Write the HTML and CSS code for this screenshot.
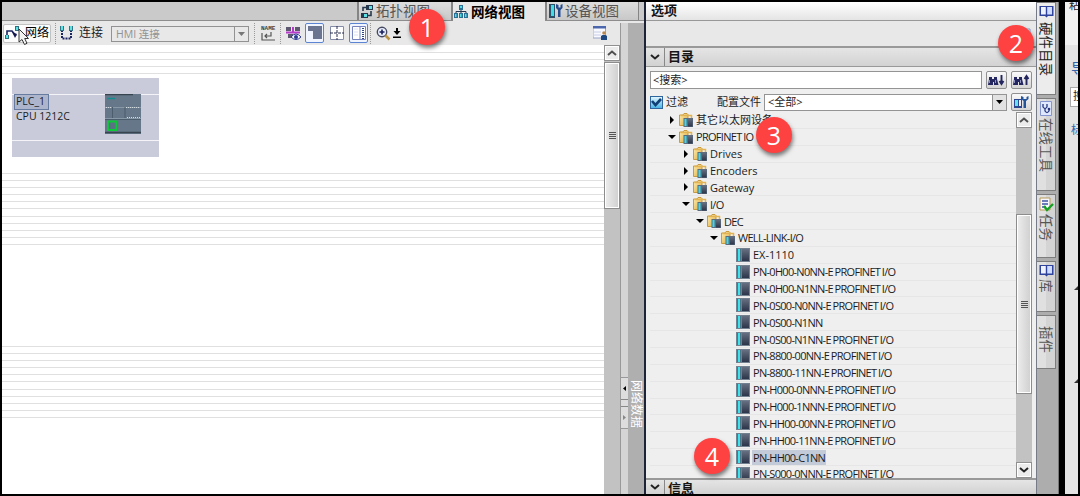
FILE: index.html
```html
<!DOCTYPE html>
<html lang="zh-CN">
<head>
    <meta charset="UTF-8">
    <meta name="viewport" content="width=device-width, initial-scale=1.0">
    <title>网络视图</title>
    <link rel="stylesheet" href="styles.css">
</head>

<body>
    <!-- shared icons -->
    <svg width="0" height="0" class="sprite">
        <linearGradient id="fold" x1="0" x2="1" y1="0" y2="1"><stop offset="0" stop-color="#fff0b4"/><stop offset="1" stop-color="#dca83c"/></linearGradient>
        <linearGradient id="dark" x1="0" x2="0" y1="0" y2="1"><stop offset="0" stop-color="#667082"/><stop offset="1" stop-color="#2c3549"/></linearGradient>
        <symbol id="folder" viewBox="0 0 14 14">
            <path d="M.5 2V12.500H9V1.500L8 .5H5L4 2Z" fill="url(#fold)" stroke="#c39336" stroke-width=".9"/>
            <path d="M1.500 2.500H12.500V6" fill="none" stroke="#e2b352" stroke-width="1.500"/>
            <path d="M4.500 5H14V14H4.500Z" fill="#5c6c7e"/>
            <path d="M5.500 6H7.500V13H5.500Z" fill="#35dde8"/>
            <path d="M9 5.500H13.500V13.500H9Z" fill="url(#dark)"/>
        </symbol>
        <symbol id="module" viewBox="0 0 14 14">
            <path d="M0 0H14V14H0Z" fill="#73808f"/>
            <path d="M1 1H5V13H1Z" fill="#4f7688"/>
            <path d="M2 1H4V13H2Z" fill="#3ce3ed"/>
            <path d="M6 1H13V13H6Z" fill="url(#dark)"/>
        </symbol>
        <symbol id="up" viewBox="0 0 10 6"><path d="M1 5L5 1.500L9 5" fill="none" stroke="#505050" stroke-width="1.900"/></symbol>
        <symbol id="down" viewBox="0 0 10 6"><path d="M1 1L5 4.500L9 1" fill="none" stroke="#222" stroke-width="2"/></symbol>
        <symbol id="book" viewBox="0 0 15 13">
            <path d="M.5 1H14.500V11H9L7.500 12.500L6 11H.5Z" fill="#2f439c"/>
            <path d="M2 2H6.800V9.500H2Z" fill="#eef3ff"/><path d="M8.200 2H13V9.500H8.200Z" fill="#cfdcff"/>
        </symbol>
        <symbol id="binoc" viewBox="0 0 11 12">
            <path d="M1 3H4V5H6V3H9V5L10.500 11H6V8H5V11H0L1 5Z" fill="#23265f"/>
            <path d="M1.500 6V9M7.500 6V9" stroke="#8d92c2"/>
        </symbol>
    </svg>

    <div class="window">
        <section class="editor">
            <div class="view-tabs">
                <div class="view-tab">
                    <svg width="15" height="15" viewBox="0 0 15 15"><path d="M6 1H13V6H6ZM1 9H8V14H1Z" fill="#27384d"/><path d="M9 2H12V5H9ZM4 10H7V13H4Z" fill="#5fe0e4"/><path d="M6 3.500H3V7M8 11.500H11V7" fill="none" stroke="#27384d" stroke-width="1.600"/></svg>
                    <span>拓扑视图</span>
                </div>
                <div class="view-tab active">
                    <svg width="14" height="14" viewBox="0 0 14 14"><path d="M5 0H9V5H5ZM0 8H4V13H0ZM5 8H9V13H5ZM10 8H14V13H10Z" fill="#2b6f95"/><path d="M6 1H8V3H6ZM1 9H2.500V12H1ZM6 9H7.500V12H6ZM11 9H12.500V12H11Z" fill="#51dce6"/><path d="M2 8V6.500H12V8M7 5V8" fill="none" stroke="#24364f"/></svg>
                    <span>网络视图</span>
                </div>
                <div class="view-tab">
                    <svg width="15" height="14" viewBox="0 0 15 14"><path d="M0 0H6V14H0Z" fill="#2d5068"/><path d="M2 1H5V12H2Z" fill="#3fdde8"/><path d="M7 0V4L9 6V13H11.500V6L13.500 4V0L11.500 1V3.500H9.500V1Z" fill="#264c8e"/></svg>
                    <span>设备视图</span>
                </div>
            </div>

            <div class="editor-body">
                <div class="editor-main">
                    <div class="toolbar">
                        <button class="tool-network">
                            <svg width="17" height="14" viewBox="0 0 17 14"><path d="M2 9V5H7L11 10" fill="none" stroke="#1b2360" stroke-width="1.600"/><path d="M0 9H4V13H0ZM10 0H14V5H10Z" fill="#2e6d82"/><path d="M1 9H3V12H1ZM11 1H13V4H11Z" fill="#55e3e3"/><path d="M7 6L12 8L10 12Z" fill="#14194f"/></svg>
                            <span>网络</span>
                        </button>
                        <i class="sep"></i>
                        <svg class="tool-link" width="13" height="14" viewBox="0 0 13 14"><path d="M2 4V12.500H11V4" fill="none" stroke="#1c2564" stroke-width="2" stroke-dasharray="2 1"/><path d="M0 0H4V5H0ZM9 0H13V5H9Z" fill="#347485"/><path d="M1 0H3V4H1ZM10 0H12V4H10Z" fill="#5ce2e2"/></svg>
                        <span class="tool-label">连接</span>
                        <div class="select-disabled"><span>HMI 连接</span><b><svg width="7" height="4"><path d="M0 0H7L3.500 4Z" fill="#777"/></svg></b></div>
                        <i class="sep"></i>
                        <div class="name-icon"><small>NAME</small><svg width="15" height="9" viewBox="0 0 15 9"><path d="M1 1V8H14M10 0V4H4M6 2L4 4L6 6" fill="none" stroke="#555" stroke-width="1.200"/></svg></div>
                        <i class="sep"></i>
                        <svg class="tool-see" width="16" height="15" viewBox="0 0 16 15"><path d="M0 1H5V5H0ZM9 1H14V5H9ZM2 8H7V12H2Z" fill="#5b5870"/><path d="M0 6.500H14M7 1V7" stroke="#b63bc9" stroke-width="2"/><path d="M5 11Q10 5 15 11Q10 16 5 11Z" fill="#fff" stroke="#2c3992"/><circle cx="10" cy="11" r="2" fill="#2c3992"/></svg>
                        <button class="tool on"><svg width="14" height="14"><path d="M0 0H14V13H5V5H0Z" fill="#6c7590"/></svg></button>
                        <button class="tool"><svg width="14" height="14" viewBox="0 0 14 14"><path d="M.5.500H13.500V13.500H.5Z" fill="#fff" stroke="#858ca8"/><path d="M0 7H14M7 0V14" stroke="#29304e" stroke-dasharray="3 1"/></svg></button>
                        <button class="tool on"><svg width="14" height="14" viewBox="0 0 14 14"><path d="M.5.500H13.500V13.500H.5Z" fill="#fff" stroke="#7582bd"/><path d="M7 1H9V13H7Z" fill="#b5c0e8"/><path d="M11 2V13" stroke="#35447a" stroke-width="2" stroke-dasharray="1 1"/><path d="M2 3H6M2 6H6M2 9H6" stroke="#dce1f3"/></svg></button>
                        <i class="sep sep-last"></i>
                        <svg width="15" height="15" viewBox="0 0 15 15"><circle cx="6" cy="6" r="4.700" fill="#e8f0ff" stroke="#454962" stroke-width="1.400"/><path d="M3.500 6H8.500M6 3.500V8.500" stroke="#18205f" stroke-width="1.600"/><path d="M9.500 9.500L13.500 13.500" stroke="#bd9442" stroke-width="2.500"/></svg>
                        <svg class="zoom-fit" width="8" height="11" viewBox="0 0 8 11"><path d="M3 0H5V3H7.500L4 7L.5 3H3ZM0 8.500H8V10H0Z" fill="#000"/></svg>
                        <svg class="tool-right" width="14" height="14" viewBox="0 0 14 14"><path d="M0 0H12.500V12H0Z" fill="#f7f9ff" stroke="#98a3c6"/><path d="M0 0H13V2.500H0Z" fill="#4c66ae"/><path d="M0 6H8M0 9H8" stroke="#c8cee4"/><circle cx="11" cy="7" r="1.800" fill="#b98850"/><path d="M8 14V10L9.500 9H12.500L14 10V14Z" fill="#204880"/></svg>
                    </div>
                    <div class="canvas-row">
                        <div class="canvas">
                            <div class="lines lines-top"></div>
                            <div class="plc">
                                <div class="plc-text">
                                    <b>PLC_1</b>
                                    <span>CPU 1212C</span>
                                </div>
                                <svg class="plc-device" width="36" height="40" viewBox="0 0 36 40"><path d="M0 0H36V40H0Z" fill="#657789"/><path d="M0 .5H28M0 38.500H36" stroke="#38444f" stroke-width="1.500"/><path d="M2 4.500H10" stroke="#128e91" stroke-width="1.500"/><path d="M0 13.500H36M0 24.500H36" stroke="#8998a6"/><path d="M1 13.500H7M21 13.500H35M22 23.500H35" stroke="#d3dae0" stroke-dasharray="1 1"/><path d="M7.500 13V24M20 13V24M0 25.500H36" stroke="#4c5d6d"/><path d="M3 27.500H11.500V36H3Z" fill="#587482" stroke="#0fc83a" stroke-width="1.800"/></svg>
                            </div>
                            <div class="lines"></div>
                            <div class="lines lines-low"></div>
                        </div>
                        <div class="scrollbar">
                            <div class="scroll-btn"><svg width="10" height="6"><use href="#up"/></svg></div>
                            <div class="thumb thumb-editor"><i></i></div>
                        </div>
                    </div>
                </div>
                <div class="splitter">
                    <div class="splitter-btns">
                        <b><svg width="3" height="5"><path d="M3 0V5L0 2.500Z"/></svg></b>
                        <em></em>
                        <b><svg width="3" height="5"><path d="M0 0V5L3 2.500Z" fill="#888"/></svg></b>
                    </div>
                </div>
                <div class="side-label">网络数据</div>
            </div>
        </section>

        <section class="catalog">
            <h2 class="options-title">选项</h2>
            <div class="options-bar"><svg width="13" height="11"><path d="M1 1H12V10H1Z" fill="#fff" stroke="#8aa0ce"/></svg></div>
            <div class="section-head"><b><svg width="10" height="6"><use href="#down"/></svg></b><h2>目录</h2></div>
            <div class="search-row">
                <div class="field search">&lt;搜索&gt;</div>
                <button class="mini"><svg width="17" height="12" viewBox="0 0 17 12"><use href="#binoc" width="11" height="12"/><path d="M13.500 1V9M11.500 7L13.500 10L15.500 7" fill="none" stroke="#23265f" stroke-width="1.900"/></svg></button>
                <button class="mini"><svg width="17" height="12" viewBox="0 0 17 12"><use href="#binoc" width="11" height="12"/><path d="M13.500 11V3M11.500 5L13.500 2L15.500 5" fill="none" stroke="#23265f" stroke-width="1.900"/></svg></button>
            </div>
            <div class="filter-row">
                <i class="check"><svg width="11" height="11" viewBox="0 0 11 11"><path d="M1 4L4.500 8L10 2" fill="none" stroke="#123f75" stroke-width="2.600"/></svg></i>
                <span>过滤</span>
                <label>配置文件</label>
                <div class="field profile"><span>&lt;全部&gt;</span><b><svg width="7" height="4"><path d="M0 0H7L3.500 4Z"/></svg></b></div>
                <button class="mini"><svg width="15" height="14" viewBox="0 0 15 14"><path d="M0 4H8V13H0Z" fill="#2b4791"/><path d="M1 5H4V11H1Z" fill="#64e2ee"/><path d="M5 5H7V11H5Z" fill="#eef"/><path d="M7 1V4L9.500 6V13H12V6L14.500 4V1L12.500 2V4H9.500V2Z" fill="#23559a"/></svg></button>
            </div>
            <div class="tree-wrap">
                <ul class="tree">
                    <li class="l1"><i class="closed"></i><svg><use href="#folder"/></svg><span>其它以太网设备</span></li>
                    <li class="l1"><i class="open"></i><svg><use href="#folder"/></svg><span class="tight">PROFINET IO</span></li>
                    <li class="l2"><i class="closed"></i><svg><use href="#folder"/></svg><span>Drives</span></li>
                    <li class="l2"><i class="closed"></i><svg><use href="#folder"/></svg><span>Encoders</span></li>
                    <li class="l2"><i class="closed"></i><svg><use href="#folder"/></svg><span>Gateway</span></li>
                    <li class="l2"><i class="open"></i><svg><use href="#folder"/></svg><span class="tight">I/O</span></li>
                    <li class="l3"><i class="open"></i><svg><use href="#folder"/></svg><span class="tight">DEC</span></li>
                    <li class="l4"><i class="open"></i><svg><use href="#folder"/></svg><span class="tight">WELL-LINK-I/O</span></li>
                    <li class="l5"><svg><use href="#module"/></svg><span>EX-1110</span></li>
                    <li class="l5"><svg><use href="#module"/></svg><span class="tight">PN-0H00-N0NN-E PROFINET I/O</span></li>
                    <li class="l5"><svg><use href="#module"/></svg><span class="tight">PN-0H00-N1NN-E PROFINET I/O</span></li>
                    <li class="l5"><svg><use href="#module"/></svg><span class="tight">PN-0S00-N0NN-E PROFINET I/O</span></li>
                    <li class="l5"><svg><use href="#module"/></svg><span class="tight">PN-0S00-N1NN</span></li>
                    <li class="l5"><svg><use href="#module"/></svg><span class="tight">PN-0S00-N1NN-E PROFINET I/O</span></li>
                    <li class="l5"><svg><use href="#module"/></svg><span class="tight">PN-8800-00NN-E PROFINET I/O</span></li>
                    <li class="l5"><svg><use href="#module"/></svg><span class="tight">PN-8800-11NN-E PROFINET I/O</span></li>
                    <li class="l5"><svg><use href="#module"/></svg><span class="tight">PN-H000-0NNN-E PROFINET I/O</span></li>
                    <li class="l5"><svg><use href="#module"/></svg><span class="tight">PN-H000-1NNN-E PROFINET I/O</span></li>
                    <li class="l5"><svg><use href="#module"/></svg><span class="tight">PN-HH00-00NN-E PROFINET I/O</span></li>
                    <li class="l5"><svg><use href="#module"/></svg><span class="tight">PN-HH00-11NN-E PROFINET I/O</span></li>
                    <li class="l5 selected"><svg><use href="#module"/></svg><span class="tight">PN-HH00-C1NN</span></li>
                    <li class="l5"><svg><use href="#module"/></svg><span class="tight">PN-S000-0NNN-E PROFINET I/O</span></li>
                </ul>
                <div class="scrollbar">
                    <div class="scroll-btn"><svg width="10" height="6"><use href="#up"/></svg></div>
                    <div class="thumb thumb-tree"><i></i></div>
                    <div class="scroll-btn"><svg width="10" height="6"><use href="#down"/></svg></div>
                </div>
            </div>
            <div class="section-head info"><b><svg width="10" height="6"><use href="#down"/></svg></b><h2>信息</h2></div>
        </section>

        <nav class="task-tabs">
            <div class="task-tab t-hardware"><svg width="15" height="13"><use href="#book"/></svg><span>硬件目录</span></div>
            <div class="task-tab t-online"><svg width="12" height="15" viewBox="0 0 12 15"><path d="M.5.500H11.500V14.500H.5Z" fill="#dfe8ff" stroke="#8495d0"/><path d="M3 3V6Q5 9 7 6V3M5 8V10Q7 13 9 10V9" fill="none" stroke="#26377e" stroke-width="1.300"/><circle cx="9" cy="8" r="1.300" fill="#26377e"/></svg><span>在线工具</span></div>
            <div class="task-tab t-tasks"><svg width="15" height="15" viewBox="0 0 15 15"><path d="M1 1H11V13H1Z" fill="#f5f6ff" stroke="#b89a56"/><path d="M3 4H9M3 7H9M3 10H7" stroke="#4056a4" stroke-width="1.500"/><path d="M5 9L8 13L14 7" fill="none" stroke="#16a023" stroke-width="2.400"/></svg><span>任务</span></div>
            <div class="task-tab t-lib"><svg width="15" height="13"><use href="#book"/></svg><span>库</span></div>
            <div class="task-tab t-addon"><span>插件</span></div>
        </nav>

        <aside class="behind">
            <div class="behind-top">粘</div>
            <span class="behind-link">导</span>
            <div class="behind-field">搜</div>
            <span class="behind-small">标</span>
            <svg width="4" height="4"><path d="M4 0V4H0Z" fill="#333"/></svg>
            <svg width="4" height="4"><path d="M4 0V4H0Z" fill="#333"/></svg>
        </aside>
    </div>

    <!-- mouse pointer -->
    <svg class="pointer" width="12" height="18" viewBox="0 0 12 18"><path d="M1 1V14L4 11.500L6.500 16.500L9 15.300L6.700 10.500H10.500Z" fill="#f4f4f4" stroke="#333"/></svg>

    <!-- step markers -->
    <div class="step step-1">1</div>
    <div class="step step-2">2</div>
    <div class="step step-3">3</div>
    <div class="step step-4">4</div>
</body>
</html>
```
FILE: styles.css
```css
/* Global Styles */
* {
    box-sizing: border-box;
    margin: 0;
    padding: 0;
}

body {
    width: 1080px;
    height: 496px;
    padding: 2px;
    overflow: hidden;
    position: relative;
    background-color: #000;
    color: #1c1c1c;
    font-family: "Open Sans", "Noto Sans CJK SC", sans-serif;
    font-size: 12px;
    line-height: 16px;
}

svg {
    display: block;
    flex-shrink: 0;
}

i, em {
    font-style: normal;
}

button {
    border: none;
    background: none;
    font: inherit;
}

.sprite {
    position: absolute;
}

.window {
    display: flex;
    height: 492px;
}

/* Editor */
.editor {
    width: 642px;
    display: flex;
    flex-direction: column;
    background-color: #e8e8e8;
}

.view-tabs {
    height: 19px;
    display: flex;
    padding-left: 355px;
    background-color: #cacaca;
    border-bottom: 1px solid #8d8d8d;
}

.view-tab {
    width: 94px;
    height: 18px;
    display: flex;
    align-items: center;
    gap: 1px;
    padding-left: 1px;
    border-left: 2px solid #858585;
    background: linear-gradient(#dedede, #c8c8c8);
    color: #555;
    font-size: 13.5px;
    white-space: nowrap;
}

.view-tab:last-child {
    padding-left: 2px;
    border-right: 1px solid #858585;
}

.view-tab.active {
    height: 19px;
    gap: 3px;
    background: #e8e8e8;
    color: #000;
    font-weight: bold;
}

.editor-body {
    flex: 1;
    display: flex;
    min-height: 0;
}

.editor-main {
    width: 618px;
    display: flex;
    flex-direction: column;
}

.toolbar {
    height: 24px;
    display: flex;
    align-items: center;
    padding-left: 1px;
    background-color: #e8e8e8;
}

.tool-network {
    width: 48px;
    height: 19px;
    display: flex;
    align-items: center;
    gap: 3px;
    padding-left: 1px;
    border: 1px solid #c2c2c2;
    border-radius: 2px;
    background-color: #fcfcfc;
    font-size: 12px;
    white-space: nowrap;
}

.sep {
    height: 21px;
    margin-left: 4px;
    border-left: 1px dotted #999;
}

.tool-link {
    margin-left: 4px;
}

.tool-label {
    margin-left: 6px;
    font-size: 12px;
}

.select-disabled {
    width: 138px;
    height: 16px;
    display: flex;
    justify-content: space-between;
    margin: 1px 1px 0 8px;
    padding-left: 4px;
    border: 1px solid #929292;
    color: #929292;
    font-size: 10.5px;
    line-height: 14px;
}

.select-disabled b {
    width: 14px;
    display: flex;
    align-items: center;
    justify-content: center;
    border-left: 1px solid #929292;
}

.name-icon {
    width: 15px;
    margin-left: 6px;
    color: #444;
}

.name-icon small {
    display: block;
    height: 6px;
    font-family: "Liberation Mono", monospace;
    font-size: 6px;
    font-weight: bold;
    line-height: 6px;
}

.tool-see {
    margin: 0 3px 0 5px;
}

.tool {
    width: 19px;
    height: 20px;
    display: flex;
    align-items: center;
    justify-content: center;
    margin-right: 3px;
}

.tool.on {
    border: 1px solid #5b85d2;
    border-radius: 2px;
    background-color: #f1f5ff;
}

.sep-last {
    margin: 0 5px 0 -1px;
}

.zoom-fit {
    margin-left: 2px;
}

.tool-right {
    margin: 0 13px 0 auto;
}

.canvas-row {
    flex: 1;
    display: flex;
}

.canvas {
    width: 602px;
    background-color: #fff;
}

.lines {
    height: 72px;
    margin-top: 16px;
    background: repeating-linear-gradient(#e0e0e0 0 1px, #fff 1px 7.1px);
}

.lines-top {
    height: 23px;
    margin-top: 7px;
}

.lines-low {
    margin-top: 101px;
}

.plc {
    width: 147px;
    height: 79px;
    display: flex;
    justify-content: space-between;
    margin: 3px 0 0 10px;
    padding: 16px 18px 0 2px;
    background: linear-gradient(#c9cbda 16px, #f4f4f8 16px 17px, #c9cbda 17px 62px, #f4f4f8 62px 63px, #c9cbda 63px);
}

.plc-text {
    font-size: 10.5px;
    line-height: 13px;
}

.plc-text b {
    width: 35px;
    height: 16px;
    display: block;
    padding-left: 1px;
    border: 1px solid #657ca0;
    background-color: #adb5cd;
    font-weight: normal;
}

.plc-text span {
    padding-left: 2px;
}

/* Scrollbars */
.scrollbar {
    width: 16px;
    display: flex;
    flex-direction: column;
    background-color: #c2c2c2;
}

.scroll-btn {
    height: 16px;
    display: flex;
    align-items: center;
    justify-content: center;
    border: 1px solid #909090;
    background-color: #ececec;
    box-shadow: inset 0 0 0 1px #fff;
}

.thumb {
    display: flex;
    align-items: center;
    justify-content: center;
    border: 1px solid #8c8c8c;
    background: linear-gradient(90deg, #ededed, #cfcfcf);
    box-shadow: inset 0 0 0 1px #fff;
}

.thumb i {
    width: 7px;
    height: 7px;
    background: repeating-linear-gradient(#555 0 1px, #ddd 1px 2px);
}

.thumb-editor {
    height: 147px;
    margin-top: 1px;
}

.splitter {
    width: 8px;
    margin-top: 2px;
    padding-top: 354px;
    border-left: 1px solid #999;
    background-color: #d5d5d5;
}

.splitter-btns {
    height: 52px;
    display: flex;
    flex-direction: column;
    border: solid #999;
    border-width: 1px 0;
    background-color: #ddd;
}

.splitter-btns b {
    height: 21px;
    display: flex;
    align-items: center;
    justify-content: center;
}

.splitter-btns em {
    height: 9px;
    border: solid #888;
    border-width: 1px 0;
}

.side-label {
    width: 16px;
    margin-top: 2px;
    padding-top: 357px;
    background-color: #afafaf;
    color: #fff;
    font-size: 12px;
    line-height: 15px;
    writing-mode: vertical-rl;
    text-orientation: sideways;
}

/* Hardware catalog */
.catalog {
    width: 393px;
    display: flex;
    flex-direction: column;
    border-left: 2px solid #1d2438;
    border-right: 1px solid #777b88;
    background-color: #efefef;
}

.catalog h2 {
    color: #151515;
    font-size: 13px;
    font-weight: bold;
}

.catalog .options-title {
    height: 19px;
    padding-left: 5px;
    border-bottom: 1px solid #989898;
    background: linear-gradient(#fff, #e4e4e4);
    line-height: 17px;
}

.options-bar {
    height: 25px;
    display: flex;
    align-items: center;
    justify-content: flex-end;
    padding-right: 5px;
    background-color: #e8e8e8;
}

.section-head {
    height: 21px;
    display: flex;
    border-top: 2px solid #999;
    border-bottom: 1px solid #999;
    background: linear-gradient(#e5e5e5, #d2d2d2);
}

.section-head b {
    width: 19px;
    display: flex;
    align-items: center;
    justify-content: center;
    border-right: 1px solid #888;
}

.section-head h2 {
    padding-left: 3px;
    line-height: 17px;
}

.search-row {
    height: 25px;
    display: flex;
    align-items: center;
    gap: 4px;
    padding: 0 4px 0 4px;
}

.field {
    border: 1px solid #949494;
    background-color: #fff;
    font-size: 11px;
}

.search {
    width: 334px;
    height: 18px;
    padding-left: 2px;
    line-height: 15px;
}

.mini {
    width: 21px;
    height: 18px;
    display: flex;
    flex-shrink: 0;
    align-items: center;
    justify-content: center;
    border: 1px solid #909090;
    border-radius: 2px;
    background: linear-gradient(#fafafa, #d4d4d4);
}

.filter-row {
    height: 20px;
    display: flex;
    align-items: center;
    padding-left: 4px;
    font-size: 11px;
    white-space: nowrap;
}

.check {
    width: 13px;
    height: 13px;
    flex-shrink: 0;
    margin-right: 3px;
    border: 1px solid #2d659c;
    background: linear-gradient(#e0f6ff, #4cb4e6);
}

.filter-row label {
    margin-left: 29px;
}

.profile {
    width: 243px;
    height: 17px;
    display: flex;
    flex-shrink: 0;
    justify-content: space-between;
    margin: 0 4px 0 auto;
    padding-left: 3px;
    line-height: 14px;
}

.profile b {
    width: 14px;
    display: flex;
    align-items: center;
    justify-content: center;
    border-left: 1px solid #949494;
    background-color: #e2e2e2;
}

.filter-row .mini {
    margin-right: 4px;
}

.tree-wrap {
    height: 366px;
    display: flex;
    padding: 0 4px;
}

.tree {
    width: 366px;
    overflow: hidden;
    list-style: none;
}

.tree li {
    height: 16.87px;
    display: flex;
    align-items: center;
    border-bottom: 1px solid #e6e6e6;
    font-size: 11px;
    line-height: 15px;
    white-space: nowrap;
}

.tree li svg {
    width: 14px;
    height: 14px;
}

.tree li span {
    margin-left: 2px;
    padding: 0 1px;
}

.tree .tight {
    letter-spacing: -0.7px;
    word-spacing: -0.5px;
}

.tree i {
    width: 14px;
}

.closed::before {
    content: "";
    display: block;
    width: 0;
    margin-left: 5px;
    border: solid transparent;
    border-width: 4px 0 4px 4px;
    border-left-color: #000;
}

.open::before {
    content: "";
    display: block;
    width: 0;
    margin-left: 3px;
    border: solid transparent;
    border-width: 4px 4px 0;
    border-top-color: #000;
}

.l1 { padding-left: 15px; }
.l2 { padding-left: 29px; }
.l3 { padding-left: 43px; }
.l4 { padding-left: 57px; }
.l5 { padding-left: 86px; }

.selected span {
    background-color: #c2cbd7;
}

.thumb-tree {
    height: 180px;
    margin: 86px 0 68px;
}

.section-head.info {
    height: 16px;
    border-bottom: none;
    overflow: hidden;
}

/* Task card tabs */
.task-tabs {
    width: 22px;
    padding-right: 2px;
    border-right: 1px solid #777;
    background-color: #adadad;
}

.task-tab {
    width: 19px;
    display: flex;
    flex-direction: column;
    align-items: center;
    gap: 2px;
    margin-bottom: 3px;
    padding-top: 2px;
    border: 1px solid #7d7d7d;
    border-left: none;
    background: linear-gradient(90deg, #e0e0e0 50%, #d4d4d4 50%);
    color: #555;
    font-size: 13.5px;
    line-height: 16px;
}

.task-tab span {
    writing-mode: vertical-rl;
    text-orientation: sideways;
}

.t-hardware {
    height: 93px;
    gap: 4px;
    background: #ececec;
    color: #222;
}

.t-online { height: 93px; }
.t-tasks { height: 64px; }
.t-lib { height: 51px; }
.t-addon { height: 54px; padding-top: 10px; }

/* Window behind */
.behind {
    width: 13px;
    display: flex;
    flex-direction: column;
    align-items: flex-end;
    margin-left: 6px;
    overflow: hidden;
    background-color: #e4e4e4;
    white-space: nowrap;
}

.behind-top {
    width: 13px;
    height: 43px;
    padding-left: 4px;
    background-color: #f2f2f2;
    font-size: 11px;
    line-height: 6px;
}

.behind-link {
    width: 7px;
    margin-top: 15px;
    color: #2f64ad;
    font-size: 15px;
}

.behind-field {
    width: 8px;
    height: 20px;
    margin-top: 11px;
    padding-left: 2px;
    border: 1px solid #aaa;
    border-right: none;
    background-color: #fff;
    font-size: 11px;
}

.behind-small {
    width: 7px;
    margin: 15px 0 148px;
    color: #2f64ad;
    font-size: 11px;
}

.behind svg {
    margin-bottom: 89px;
}

/* Overlays */
.pointer {
    position: absolute;
    left: 18px;
    top: 28px;
}

.step {
    position: absolute;
    width: 36px;
    height: 36px;
    border-radius: 50%;
    background-color: #fe4242;
    box-shadow: 1px 3px 4px rgba(0, 0, 0, 0.5);
    color: #fff;
    font-size: 25px;
    line-height: 36px;
    text-align: center;
}

.step-1 { left: 409px; top: 9px; }
.step-2 { left: 998px; top: 25px; }
.step-3 { left: 756px; top: 117px; }
.step-4 { left: 694px; top: 438px; }
```
